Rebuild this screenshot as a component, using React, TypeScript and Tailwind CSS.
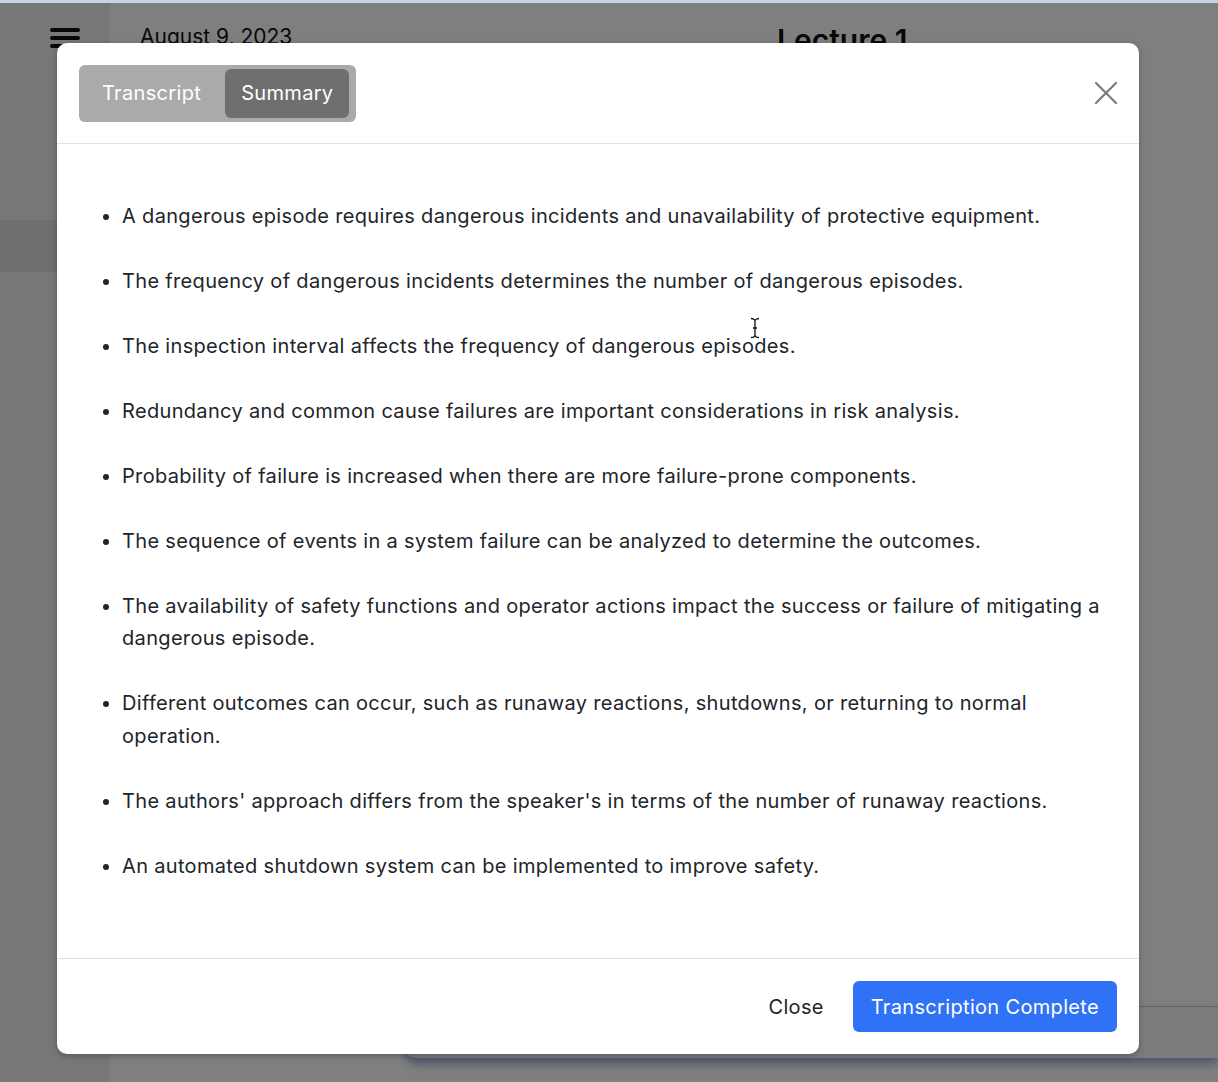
import React, { useState } from 'react';

const points: string[] = [
  'A dangerous episode requires dangerous incidents and unavailability of protective equipment.',
  'The frequency of dangerous incidents determines the number of dangerous episodes.',
  'The inspection interval affects the frequency of dangerous episodes.',
  'Redundancy and common cause failures are important considerations in risk analysis.',
  'Probability of failure is increased when there are more failure-prone components.',
  'The sequence of events in a system failure can be analyzed to determine the outcomes.',
  'The availability of safety functions and operator actions impact the success or failure of mitigating a dangerous episode.',
  'Different outcomes can occur, such as runaway reactions, shutdowns, or returning to normal operation.',
  "The authors' approach differs from the speaker's in terms of the number of runaway reactions.",
  'An automated shutdown system can be implemented to improve safety.',
];

const font = { fontFamily: 'Inter, "Noto Sans", sans-serif' };

const App: React.FC = () => {
  const [tab, setTab] = useState<'transcript' | 'summary'>('summary');

  return (
    <div className="relative w-[1218px] h-[1082px] overflow-hidden bg-white" style={font}>
      {/* page behind the dialog */}
      <div className="flex h-full pt-[3px]">
        <aside className="w-[110px] shrink-0 bg-[#eeeeee] flex flex-col">
          <div className="h-[217px] relative">
            <div className="absolute left-[50px] top-[25px] flex flex-col gap-[4px]">
              <span className="block w-[30px] h-[4px] rounded-full bg-[#111]" />
              <span className="block w-[30px] h-[4px] rounded-full bg-[#111]" />
              <span className="block w-[30px] h-[4px] rounded-full bg-[#111]" />
            </div>
          </div>
          <div className="h-[52px] bg-[#dedede]" />
        </aside>
        <main className="flex-1 relative">
          <div className="flex items-start pt-[18px]">
            <div className="pl-[30px] w-[667px] text-[21px] leading-[32px] text-[#111]">August 9, 2023</div>
            <div className="text-[30px] leading-[40px] font-semibold text-[#111] -mt-[1px]">Lecture 1</div>
          </div>
        </main>
      </div>
      <div className="absolute left-[405px] right-0 top-[1006px] h-[52px] bg-[#f6f6f6] rounded-bl-[10px] border-t border-[#b8c6e8] shadow-[0_6px_10px_rgba(40,70,150,0.45)]" />

      {/* backdrop */}
      <div className="absolute inset-x-0 top-[3px] bottom-0 bg-black/50" />
      <div className="absolute inset-x-0 top-0 h-[3px] bg-[#c9d3e2]" />

      {/* dialog */}
      <div className="absolute left-[57px] top-[43px] w-[1082px] h-[1011px] bg-white rounded-[10px] shadow-[0_2px_6px_rgba(0,0,0,0.25)] flex flex-col text-[#212529] tracking-[0.33px]">
        <div className="h-[101px] shrink-0 flex items-center justify-between pl-[22px] pr-[21px] border-b border-[#dee2e6]">
          <div className="flex items-center gap-[8px] bg-[#aaaaaa] rounded-[6px] h-[57px] pl-[7px] pr-[7px]">
            <button
              onClick={() => setTab('transcript')}
              className={`h-[49px] px-[16px] rounded-[6px] text-[20px] text-white ${tab === 'transcript' ? 'bg-[#6f6f6f]' : ''}`}
            >
              Transcript
            </button>
            <button
              onClick={() => setTab('summary')}
              className={`h-[49px] px-[16px] rounded-[6px] text-[20px] text-white ${tab === 'summary' ? 'bg-[#6f6f6f]' : ''}`}
            >
              Summary
            </button>
          </div>
          <button className="w-[26px] h-[26px] flex items-center justify-center translate-x-[1px]">
            <svg width="24" height="24" viewBox="0 0 24 24" fill="none" stroke="#7a7a7a" strokeWidth="2.2" strokeLinecap="round">
              <path d="M2 2L22 22M22 2L2 22" />
            </svg>
          </button>
        </div>

        <div className="flex-1 px-[20px] pt-[55.5px]">
          <ul className="list-disc pl-[45px] text-[20px] leading-[32.5px]">
            {points.map((p) => (
              <li key={p} className="mb-[32.5px]">
                {p}
              </li>
            ))}
          </ul>
        </div>

        <div className="h-[96px] shrink-0 flex items-center justify-end gap-[11px] pr-[22px] border-t border-[#dee2e6]">
          <button className="h-[51px] px-[18px] text-[20px] text-[#212529]">Close</button>
          <button className="h-[51px] px-[18px] rounded-[6px] bg-[#3072f5] text-[20px] text-white">
            Transcription Complete
          </button>
        </div>
      </div>

      {/* text cursor */}
      <svg className="absolute left-[750px] top-[317px]" width="10" height="22" viewBox="0 0 10 22" fill="none" stroke="#111" strokeWidth="1.3">
        <path d="M1 1.5C3 1.5 5 2.5 5 4V18C5 19.5 3 20.5 1 20.5M9 1.5C7 1.5 5 2.5 5 4V18C5 19.5 7 20.5 9 20.5M3 11H7" />
      </svg>
    </div>
  );
};

export default App;
